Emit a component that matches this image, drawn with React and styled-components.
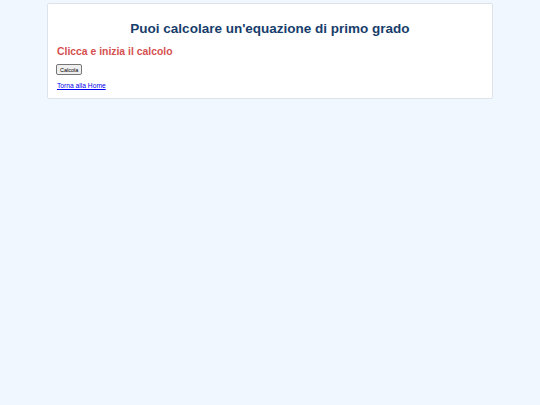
import React from 'react';
import styled, { createGlobalStyle } from 'styled-components';

const GlobalStyle = createGlobalStyle`
  html, body {
    margin: 0;
    padding: 0;
    background-color: #f0f7ff;
    font-family: "Liberation Sans", Arial, sans-serif;
  }
`;

const Card = styled.div`
  width: 426px;
  margin: 3px auto 0 auto;
  padding: 8px 9px 8.5px 9px;
  background-color: #ffffff;
  border: 1px solid #dde3ea;
  border-radius: 2px;
  font-size: 7px;
`;

const Title = styled.h1`
  margin: 9px 0 0 0;
  text-align: center;
  font-size: 13.5px;
  font-weight: bold;
  color: #173d6b;
`;

const Subtitle = styled.h2`
  margin: 9.5px 0 0 0;
  font-size: 10.4px;
  font-weight: bold;
  color: #d65050;
`;

const Button = styled.button`
  display: block;
  margin: 7.5px 0 0 -1px;
  padding: 1.5px 3px;
  font-family: "Liberation Sans", Arial, sans-serif;
  font-size: 5.5px;
  color: #000;
  background-color: #efefef;
  border: 1px solid #767676;
  border-radius: 2px;
`;

const HomeLink = styled.a`
  display: block;
  width: fit-content;
  margin: 7px 0 0 0;
  font-size: 6.7px;
  color: #0000ee;
  text-decoration: underline;
`;

const App = () => (
    <>
        <GlobalStyle/>
        <Card>
            <Title>Puoi calcolare un'equazione di primo grado</Title>
            <Subtitle>Clicca e inizia il calcolo</Subtitle>
            <Button>Calcola</Button>
            <HomeLink href="#">Torna alla Home</HomeLink>
        </Card>
    </>
)

export default App;
